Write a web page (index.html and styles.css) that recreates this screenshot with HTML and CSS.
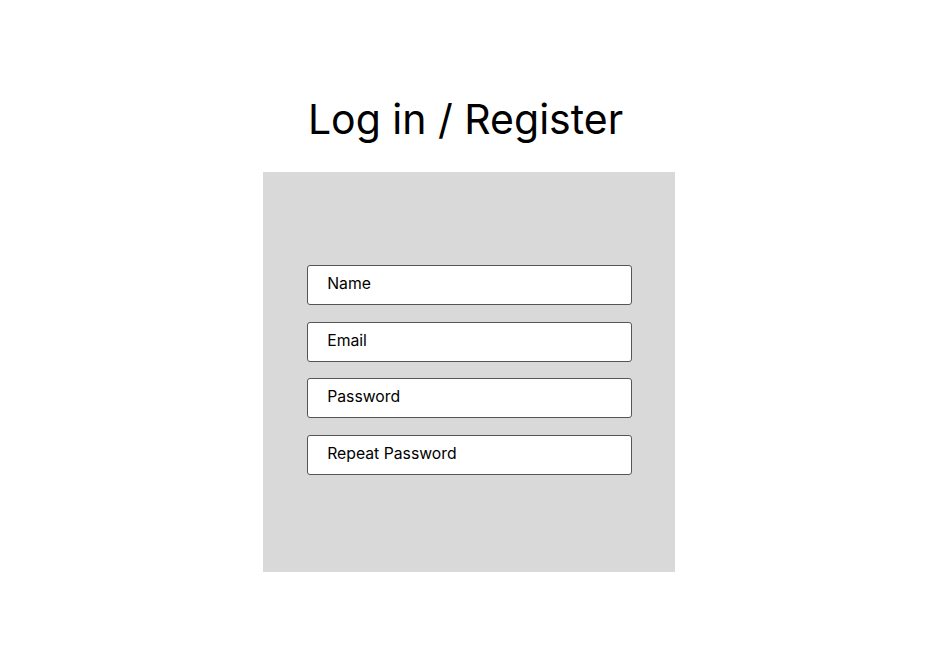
FILE: index.html
```html
<!DOCTYPE html>
<html lang="en">
<head>
<meta charset="utf-8">
<title>Log in / Register</title>
<link rel="stylesheet" href="styles.css">
</head>
<body>
  <main class="page">
    <h1 class="title">Log in / Register</h1>
    <form class="panel">
      <div class="field">Name</div>
      <div class="field">Email</div>
      <div class="field">Password</div>
      <div class="field">Repeat Password</div>
    </form>
  </main>
</body>
</html>
```

FILE: styles.css
```css
html, body {
  margin: 0;
  padding: 0;
  background: #ffffff;
}

body {
  font-family: Inter, "Noto Sans", sans-serif;
  color: #000000;
  width: 940px;
  height: 666px;
  overflow: hidden;
}

.page {
  display: flex;
  flex-direction: column;
  padding-top: 94px;
  padding-left: 263px;
}

.title {
  margin: 0;
  width: 405px;
  text-align: center;
  font-size: 41px;
  font-weight: 400;
  line-height: 50px;
  letter-spacing: 0;
}

.panel {
  margin-top: 28px;
  width: 412px;
  height: 400px;
  box-sizing: border-box;
  background: #d9d9d9;
  padding: 93px 0 0 43.7px;
  display: flex;
  flex-direction: column;
  gap: 16.67px;
}

.field {
  width: 325.3px;
  height: 40px;
  box-sizing: border-box;
  background: #ffffff;
  border: 1px solid #555555;
  border-radius: 3px;
  padding: 0 0 3px 19.5px;
  display: flex;
  align-items: center;
  font-size: 15.75px;
}
```
